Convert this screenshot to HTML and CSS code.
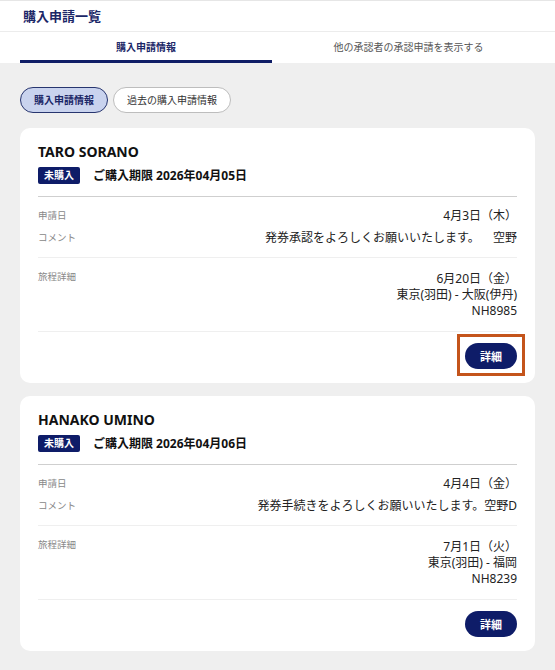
FILE: index.html
```html
<!DOCTYPE html>
<html lang="ja">
<head>
  <meta charset="UTF-8" />
  <meta name="viewport" content="width=device-width,initial-scale=1.0" />
  <title>購入申請一覧</title>
  <link rel="stylesheet" href="styles.css">
</head>
<body>
  <header class="page-header">
    <h1 class="page-title">購入申請一覧</h1>
  </header>

  <nav class="tabs">
    <a href="#" class="tab is-active">購入申請情報</a>
    <a href="#" class="tab">他の承認者の承認申請を表示する</a>
  </nav>

  <main class="content">
    <div class="filters">
      <button class="pill is-active">購入申請情報</button>
      <button class="pill">過去の購入申請情報</button>
    </div>

    <article class="card">
      <h2 class="card-name">TARO SORANO</h2>
      <div class="card-status">
        <span class="badge">未購入</span>
        <span class="deadline">ご購入期限 2026年04月05日</span>
      </div>
      <dl class="card-info">
        <div class="row"><dt>申請日</dt><dd>4月3日（木）</dd></div>
        <div class="row"><dt>コメント</dt><dd>発券承認をよろしくお願いいたします。<span class="wide-space"></span>空野</dd></div>
      </dl>
      <dl class="card-trip">
        <div class="row">
          <dt>旅程詳細</dt>
          <dd>6月20日（金）<br>東京(羽田) - 大阪(伊丹)<br>NH8985</dd>
        </div>
      </dl>
      <div class="card-actions">
        <button class="detail-btn is-focused">詳細</button>
      </div>
    </article>

    <article class="card">
      <h2 class="card-name">HANAKO UMINO</h2>
      <div class="card-status">
        <span class="badge">未購入</span>
        <span class="deadline">ご購入期限 2026年04月06日</span>
      </div>
      <dl class="card-info">
        <div class="row"><dt>申請日</dt><dd>4月4日（金）</dd></div>
        <div class="row"><dt>コメント</dt><dd>発券手続きをよろしくお願いいたします。空野D</dd></div>
      </dl>
      <dl class="card-trip">
        <div class="row">
          <dt>旅程詳細</dt>
          <dd>7月1日（火）<br>東京(羽田) - 福岡<br>NH8239</dd>
        </div>
      </dl>
      <div class="card-actions">
        <button class="detail-btn">詳細</button>
      </div>
    </article>
  </main>
</body>
</html>
```

FILE: styles.css
```css
*{box-sizing:border-box;}
body{
  margin:0;
  font-family:"Noto Sans","Noto Sans CJK JP",sans-serif;
  background:#efefef;
  color:#222;
}
button{font-family:inherit;cursor:pointer;}

/* ---------- header ---------- */
.page-header{
  background:#fff;
  border-top:1px solid #e6e6e6;
  border-bottom:1px solid #ececec;
  height:32px;
  display:flex;align-items:center;
  padding:0 23px;
}
.page-title{
  margin:0;font-size:13px;font-weight:700;color:#1b2767;line-height:18px;
}

/* ---------- tabs ---------- */
.tabs{
  display:flex;background:#fff;height:31px;
  padding:0 10px 0 20px;
}
.tab{
  display:flex;align-items:center;justify-content:center;
  font-size:10px;color:#555;text-decoration:none;
  flex:1;padding-top:1px;
  border-bottom:3px solid transparent;
}
.tab.is-active{
  flex:0 0 252px;
  color:#1b2767;font-weight:700;
  border-bottom-color:#0f1d66;
}

/* ---------- content ---------- */
.content{padding:24px 20px 18px;}
.filters{display:flex;gap:5px;margin-bottom:15px;}
.pill{
  height:26px;padding:0 13px;border-radius:13px;
  font-size:10px;line-height:1;
  background:#fff;border:1px solid #bdbdbd;color:#333;
}
.pill.is-active{
  background:#c9d3ee;border-color:#27356f;color:#1b2767;font-weight:700;
}

.card{
  background:#fff;border-radius:10px;
  padding:14px 18px 14px 18px;
  margin-bottom:13px;
}
.card-name{
  margin:0;font-size:14px;font-weight:700;line-height:20px;color:#111;
}
.card-status{
  display:flex;align-items:center;gap:13px;
  margin-top:5px;padding-bottom:12px;
  border-bottom:1px solid #cfcfcf;
}
.badge{
  display:inline-block;height:17px;line-height:17px;padding:0 6px;
  background:#0e1c68;color:#fff;font-size:10px;font-weight:700;border-radius:2px;
}
.deadline{font-size:12px;font-weight:700;line-height:17px;color:#111;}

dl{margin:0;}
dt{font-size:9.5px;color:#888;}
dd{margin:0;text-align:right;font-size:12px;color:#222;}
.row{display:flex;justify-content:space-between;gap:16px;}
.wide-space{display:inline-block;width:1.1em;}

.card-info{
  display:flex;flex-direction:column;gap:4px;
  padding:10px 0 10px;
  border-bottom:1px solid #efefef;
}
.card-info dt,.card-info dd{line-height:18px;}

.card-trip{
  padding:13px 0 12px;
  border-bottom:1px solid #efefef;
}
.card-trip dt{line-height:12px;}
.card-trip dd{line-height:16px;}

.card-actions{display:flex;justify-content:flex-end;padding-top:11px;}
.detail-btn{
  width:52px;height:26px;border-radius:13px;border:none;
  background:#0e1c68;color:#fff;font-size:11px;font-weight:700;
}
.detail-btn.is-focused{position:relative;}
.detail-btn.is-focused::after{
  content:"";position:absolute;
  top:-9px;right:-8px;bottom:-7px;left:-8px;
  border:3px solid #c4541b;
}
```
